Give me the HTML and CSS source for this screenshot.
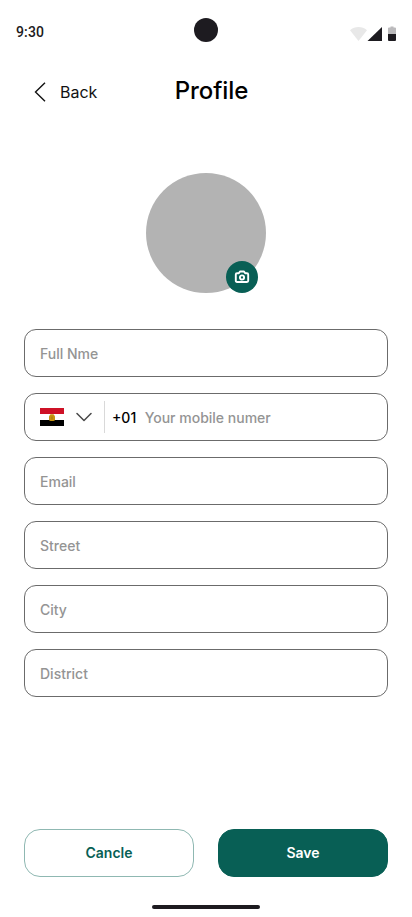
FILE: index.html
```
<!DOCTYPE html>
<html lang="en">
<head>
<meta charset="utf-8">
<meta name="viewport" content="width=device-width, initial-scale=1">
<title>Profile</title>
<link rel="stylesheet" href="styles.css">
</head>
<body>
<div class="screen">
  <div class="status-bar">
    <span class="time">9:30</span>
    <span class="punch-hole"></span>
    <svg class="status-icons" width="46" height="16" viewBox="0 0 46 16" aria-hidden="true">
      <path d="M0 4.2C2.4 2 5.300 1 8.500 1s6.100 1 8.500 3.200L8.500 15z" fill="#e8e8e8"/>
      <path d="M17.500 15L32 1v14z" fill="#1d1b20"/>
      <path d="M38 8V2.500q0-1 1-1h1.500V.5h3v1H45q1 0 1 1V8z" fill="#bbbabc"/>
      <path d="M38 8h8v6q0 1-1 1h-6q-1 0-1-1z" fill="#1d1b20"/>
    </svg>
  </div>

  <header class="header">
    <a class="back">
      <svg width="12" height="20" viewBox="0 0 12 20" fill="none" stroke="#121212" stroke-width="1.400" aria-hidden="true"><path d="M11 .7L1.500 10 11 19.300"/></svg>
      <span>Back</span>
    </a>
    <h1 class="title">Profile</h1>
  </header>

  <div class="avatar">
    <button class="camera" aria-label="Change photo">
      <svg width="16" height="16" viewBox="0 0 16 16" fill="none" stroke="#fff" stroke-width="1.900" stroke-linejoin="round" aria-hidden="true">
        <path d="M3 4.200h1.800L6 2.500h4l1.200 1.700H13q1.200 0 1.200 1.200v6.400q0 1.200-1.200 1.200H3q-1.200 0-1.200-1.200V5.400Q1.800 4.200 3 4.200z"/>
        <circle cx="8" cy="8.500" r="2.100"/>
      </svg>
    </button>
  </div>

  <form class="form">
    <div class="field">Full Nme</div>
    <div class="field phone">
      <svg class="flag" width="24" height="18" viewBox="0 0 24 18" aria-hidden="true">
        <path fill="#fff" d="M0 0h24v18H0z"/>
        <path fill="#ce1126" d="M0 0h24v6H0z"/>
        <path fill="#000" d="M0 12h24v6H0z"/>
        <path fill="#c69410" d="M10.500 6.200h3l1.500 2v4l-1.500.7h-3L9 12.200v-4z"/>
        <path fill="#b5850f" d="M11 8.500h2v3h-2z"/>
      </svg>
      <svg class="chevron" width="16" height="10" viewBox="0 0 16 10" fill="none" stroke="#494949" stroke-width="1.500" stroke-linecap="round" stroke-linejoin="round" aria-hidden="true"><path d="M1 1.500l7 7 7-7"/></svg>
      <span class="divider"></span>
      <span class="code">+01</span>
      <span class="number">Your mobile numer</span>
    </div>
    <div class="field">Email</div>
    <div class="field">Street</div>
    <div class="field">City</div>
    <div class="field">District</div>
  </form>

  <div class="actions">
    <button class="button secondary">Cancle</button>
    <button class="button primary">Save</button>
  </div>
  <div class="home-indicator"></div>
</div>
</body>
</html>
```
FILE: styles.css
```
* { box-sizing: border-box; }

body {
  margin: 0;
  background: #fff;
  font-family: Inter, sans-serif;
  color: #121212;
}

.screen {
  width: 412px;
  height: 917px;
  display: flex;
  flex-direction: column;
  overflow: hidden;
}

.status-bar {
  height: 60px;
  padding: 0 16px;
  display: grid;
  grid-template-columns: 1fr 24px 1fr;
  align-items: center;
}

.time {
  font: 500 14px/20px Roboto, sans-serif;
  letter-spacing: 0.14px;
  color: #1d1b20;
  padding-top: 4px;
}

.punch-hole {
  width: 24px;
  height: 24px;
  border-radius: 50%;
  background: #1d1b20;
}

.status-icons {
  justify-self: end;
  margin-top: 7px;
}

.header {
  height: 64px;
  padding: 0 34px;
  display: grid;
  grid-template-columns: 1fr auto 1fr;
  align-items: center;
}

.back {
  display: flex;
  align-items: center;
  gap: 14px;
  font-size: 16px;
  line-height: 24px;
}

.title {
  margin: -3px 0 0 11px;
  font-size: 24px;
  line-height: 32px;
  font-weight: 500;
  letter-spacing: -0.1px;
  color: #000;
}

.avatar {
  position: relative;
  width: 120px;
  height: 120px;
  margin: 49px auto 36px;
  border-radius: 50%;
  background: #b3b3b3;
}

.camera {
  position: absolute;
  right: 8px;
  bottom: 0;
  width: 32px;
  height: 32px;
  padding: 0;
  border: 0;
  border-radius: 50%;
  background: #085f55;
  display: grid;
  place-items: center;
}

.form {
  padding: 0 24px;
  display: flex;
  flex-direction: column;
  gap: 16px;
}

.field {
  height: 48px;
  padding: 0 15px;
  border: 1px solid #6b6b6b;
  border-radius: 12px;
  display: flex;
  align-items: center;
  font-size: 14px;
  font-weight: 500;
  line-height: 17px;
  color: #949494;
}

.chevron { margin-left: 12px; }

.divider {
  width: 1px;
  height: 32px;
  margin: 0 7px 0 12px;
  background: #d9d9d9;
}

.code { color: #000; }

.number { margin-left: 8.500px; }

.actions {
  margin-top: 132px;
  padding: 0 24px;
  display: grid;
  grid-template-columns: 1fr 1fr;
  gap: 24px;
}

.button {
  height: 48px;
  border: 1px solid #085f55;
  border-radius: 16px;
  font: 600 14px/20px Inter, sans-serif;
}

.primary {
  background: #085f55;
  color: #fff;
}

.secondary {
  background: #fff;
  border-color: #8fb8b2;
  color: #085f55;
}

.home-indicator {
  width: 108px;
  height: 4px;
  margin: 28px auto 0;
  border-radius: 2px;
  background: #1d1b20;
}
```
